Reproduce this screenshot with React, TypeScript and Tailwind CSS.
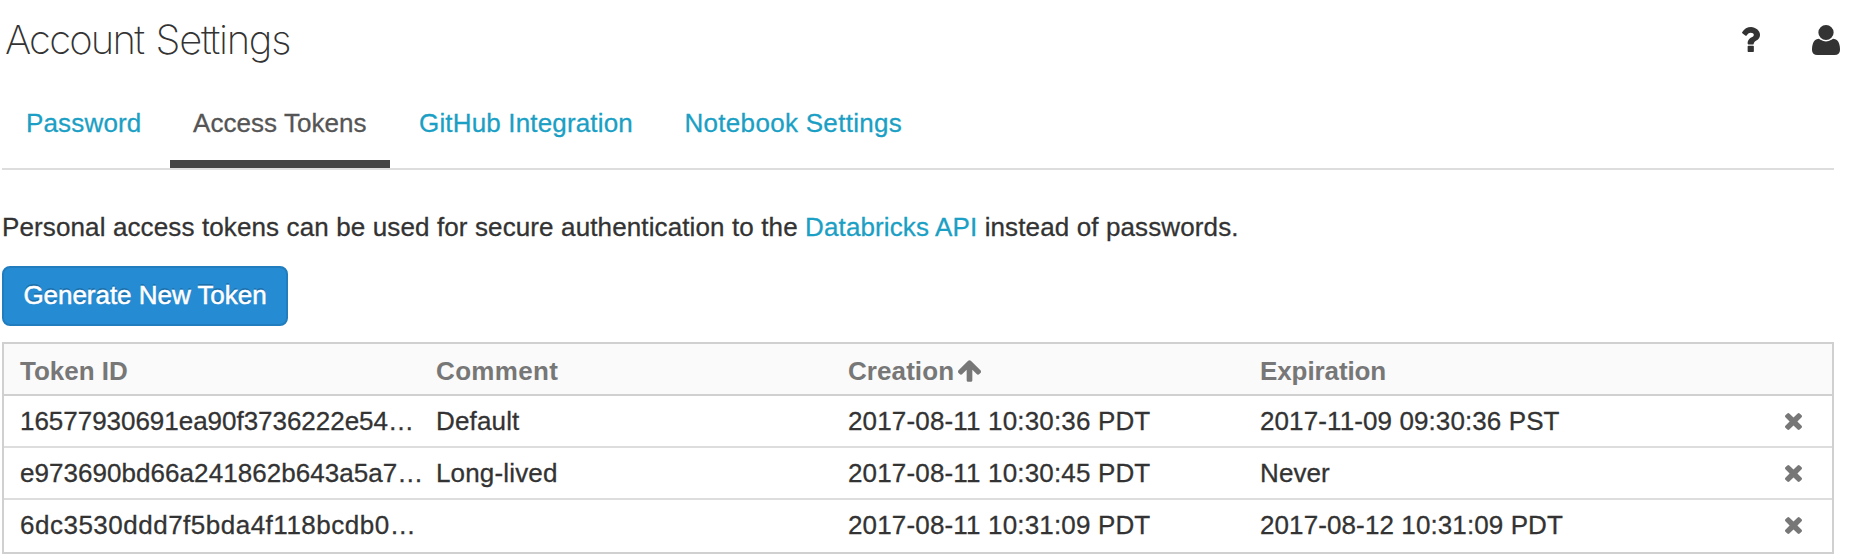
import React from "react";

type IconProps = { className?: string };

function QuestionIcon({ className }: IconProps) {
  return (
    <svg viewBox="414 376 926 1280" className={className} fill="currentColor">
      <path d="M1024 1376v240q0 16-12 28t-28 12h-240q-16 0-28-12t-12-28v-240q0-16 12-28t28-12h240q16 0 28 12t12 28zm316-600q0 54-15.5 101t-35 76.5-55 59.5-57.5 43.5-61 35.5q-41 23-68.5 65t-27.5 67q0 17-12 32.5t-28 15.5h-240q-15 0-25.5-18.5t-10.5-37.5v-45q0-83 65-156.5t143-108.5q59-27 84-56t25-76q0-42-46.5-74t-107.5-32q-65 0-108 29-35 25-107 115-13 16-31 16-12 0-25-8l-164-125q-13-10-15.5-25t5.5-28q160-266 464-266 80 0 161 31t146 83 106 127.5 41 158.5z" />
    </svg>
  );
}

function UserIcon({ className }: IconProps) {
  return (
    <svg viewBox="64 128 1408 1536" preserveAspectRatio="none" className={className} fill="currentColor">
      <path d="M1472 1405q0 120-73 189.5t-194 69.5h-874q-121 0-194-69.5t-73-189.5q0-53 3.5-103.5t14-109 26.5-108.5 43-97.5 62-81 85.5-53.5 111.5-20q9 0 42 21.5t74.5 48 108 48 133.5 21.5 133.5-21.5 108-48 74.5-48 42-21.5q61 0 111.5 20t85.5 53.5 62 81 43 97.5 26.5 108.5 14 109 3.5 103.5zm-320-893q0 159-112.5 271.5t-271.5 112.5-271.5-112.5-112.5-271.5 112.5-271.5 271.5-112.5 271.5 112.5 112.5 271.5z" />
    </svg>
  );
}

function ArrowUpIcon({ className }: IconProps) {
  return (
    <svg viewBox="117 192 1558 1472" className={className} fill="currentColor">
      <path d="M1675 971q0 51-37 90l-75 75q-38 38-91 38-54 0-90-38l-294-293v704q0 52-37.5 84.5t-90.5 32.5h-128q-53 0-90.5-32.5t-37.5-84.5v-704l-294 293q-36 38-90 38t-90-38l-75-75q-38-38-38-90 0-53 38-91l651-651q35-37 90-37 54 0 91 37l651 651q37 39 37 91z" />
    </svg>
  );
}

function TimesIcon({ className }: IconProps) {
  return (
    <svg viewBox="302 366 1188 1188" className={className} fill="currentColor">
      <path d="M1490 1322q0 40-28 68l-136 136q-28 28-68 28t-68-28l-294-294-294 294q-28 28-68 28t-68-28l-136-136q-28-28-28-68t28-68l294-294-294-294q-28-28-28-68t28-68l136-136q28-28 68-28t68 28l294 294 294-294q28-28 68-28t68 28l136 136q28 28 28 68t-28 68l-294 294 294 294q28 28 28 68z" />
    </svg>
  );
}

const tokens = [
  { id: "16577930691ea90f3736222e54…", tracking: "tracking-[-0.03px]", comment: "Default", created: "2017-08-11 10:30:36 PDT", expires: "2017-11-09 09:30:36 PST" },
  { id: "e973690bd66a241862b643a5a7…", tracking: "tracking-[0.05px]", comment: "Long-lived", created: "2017-08-11 10:30:45 PDT", expires: "Never" },
  { id: "6dc3530ddd7f5bda4f118bcdb0…", tracking: "tracking-[0.5px]", comment: "", created: "2017-08-11 10:31:09 PDT", expires: "2017-08-12 10:31:09 PDT" },
];

const rowGrid = "grid grid-cols-[416px_412px_412px_1fr_auto] items-center pl-4 pr-[30px]";

export default function App() {
  return (
    <div className="h-[559px] w-[1852px] overflow-hidden bg-white pl-0.5 font-['Liberation_Sans',Arial,sans-serif] text-[26px] leading-[40px] tracking-[0.16px] text-[#333] [-webkit-text-stroke-width:0.3px]">
      <header className="flex h-20 items-start justify-between pr-3">
        <h1 className="pt-4 pl-[3px] font-['Inter',sans-serif] text-[40px] leading-[48px] font-extralight [-webkit-text-stroke-width:0px]">
          <span className="tracking-[-1.8px] [word-spacing:3px]">Account </span>
          <span className="tracking-[-1.3px]">Settings</span>
        </h1>
        <div className="flex items-start gap-[52px] pt-[25px]">
          <QuestionIcon className="mt-0.5 h-[25px] w-[18px]" />
          <UserIcon className="h-[30px] w-7" />
        </div>
      </header>

      <nav className="flex h-[90px] w-[1832px] items-stretch border-b-2 border-[#ddd] text-[#1b9fc4]">
        <a className="w-[168px] pt-[23px] pl-6">Password</a>
        <a className="w-[220px] border-b-8 border-[#444] pt-[23px] pl-[23px] text-[#555] tracking-[0.05px]">Access Tokens</a>
        <a className="w-[266px] pt-[23px] pl-[29px]">GitHub Integration</a>
        <a className="pt-[23px] pl-[28.5px] tracking-[0.3px]">Notebook Settings</a>
      </nav>

      <p className="pt-[37px] tracking-[0.12px]">
        Personal access tokens can be used for secure authentication to the{" "}
        <a className="text-[#1b9fc4]">Databricks API</a> instead of passwords.
      </p>

      <button className="mt-[19px] block h-[60px] w-[286px] rounded-lg border-2 border-[#217dbd] bg-[#258bd3] pb-0.5 tracking-[-0.03px] text-white [-webkit-text-stroke-width:0.5px] [text-shadow:0_-2px_0_rgba(0,0,0,0.2)]">
        Generate New Token
      </button>

      <section className="mt-4 h-[212px] w-[1832px] border-2 border-[#d0d0d0]">
        <div className={`${rowGrid} h-[52px] border-b-2 border-[#d0d0d0] bg-[#fafafa] pt-[3px] font-bold text-[#777] [-webkit-text-stroke-width:0px]`}>
          <span className="tracking-normal">Token ID</span>
          <span className="tracking-[0.35px]">Comment</span>
          <span className="flex items-center gap-1 tracking-[0.08px]">
            Creation
            <ArrowUpIcon className="h-[22px] w-[23px]" />
          </span>
          <span className="tracking-[-0.1px]">Expiration</span>
        </div>
        {tokens.map((t) => (
          <div key={t.id} className={`${rowGrid} h-[52px] border-b-2 border-[#ddd] last:border-transparent`}>
            <span className={`whitespace-nowrap ${t.tracking}`}>{t.id}</span>
            <span>{t.comment}</span>
            <span>{t.created}</span>
            <span className="tracking-[0.1px]">{t.expires}</span>
            <TimesIcon className="h-[17px] w-[17px] text-[#777]" />
          </div>
        ))}
      </section>
    </div>
  );
}
